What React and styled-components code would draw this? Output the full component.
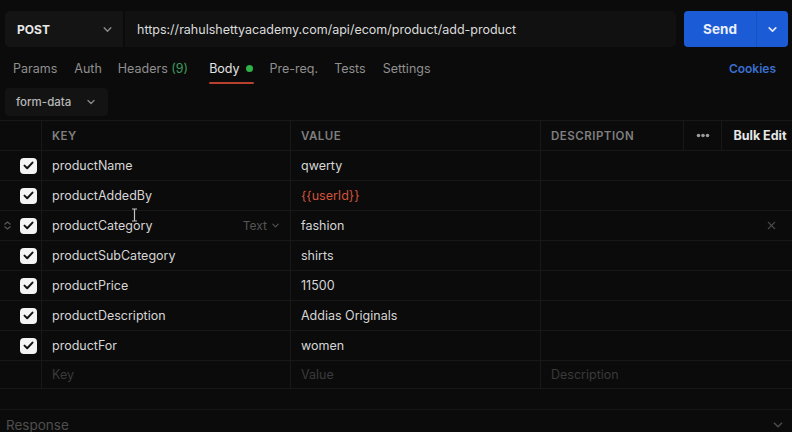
import React from 'react'
import styled, {createGlobalStyle} from 'styled-components'

const GlobalStyle = createGlobalStyle`
  html, body {
    margin: 0;
    padding: 0;
    background: #0b0b0b;
  }
  body {
    font-family: Inter, "Noto Sans", sans-serif;
    color: #e6e6e6;
    width: 792px;
    height: 432px;
    overflow: hidden;
  }
`

const Page = styled.div`
  position: relative;
  width: 792px;
`

const TopBar = styled.div`
  display: flex;
  align-items: stretch;
  height: 36px;
  padding: 11px 4px 0 5px;
  gap: 8px;
`

const UrlGroup = styled.div`
  display: flex;
  flex: 1;
  gap: 2px;
`

const Method = styled.div`
  width: 118px;
  background: #141414;
  border-radius: 5px 0 0 5px;
  display: flex;
  align-items: center;
  justify-content: space-between;
  padding: 0 10px 0 12px;
  box-sizing: border-box;
  font-weight: 700;
  font-size: 12px;
  color: #e8e8e8;
`

const Url = styled.div`
  flex: 1;
  background: #111111;
  border-radius: 0 5px 5px 0;
  display: flex;
  align-items: center;
  padding: 0 12px;
  font-size: 12.5px;
  color: #dcdcdc;
`

const Send = styled.div`
  width: 104px;
  display: flex;
  background: #1b5bd6;
  border-radius: 4px;
  overflow: hidden;
`

const SendLabel = styled.div`
  flex: 1;
  display: flex;
  align-items: center;
  justify-content: center;
  font-weight: 700;
  font-size: 13.5px;
  color: #e9eefb;
  border-right: 1px solid #1950bd;
`

const SendArrow = styled.div`
  width: 31px;
  display: flex;
  align-items: center;
  justify-content: center;
  color: #dfe7fa;
`

const Tabs = styled.div`
  display: flex;
  align-items: center;
  height: 30px;
  margin-top: 6px;
  padding: 0 16px 0 13px;
`

const Tab = styled.div`
  position: relative;
  font-size: 12.5px;
  color: ${p => (p.$active ? '#e4e4e4' : '#8f8f8f')};
  margin-right: ${p => p.$gap}px;
  display: flex;
  align-items: center;
  gap: 6px;
  height: 30px;
  &::after {
    content: '';
    display: ${p => (p.$active ? 'block' : 'none')};
    position: absolute;
    left: 0;
    right: -1px;
    bottom: -1px;
    height: 2px;
    background: #b8412e;
    border-radius: 1px;
  }
`

const Count = styled.span`
  color: #3f9a5c;
`

const Dot = styled.span`
  width: 7px;
  height: 7px;
  border-radius: 50%;
  background: #2fb344;
`

const Cookies = styled.div`
  margin-left: auto;
  font-size: 12px;
  font-weight: 600;
  color: #3a6fcf;
`

const BodyBar = styled.div`
  padding: 5px 0 4px 5px;
`

const BodyType = styled.div`
  width: 103px;
  height: 28px;
  box-sizing: border-box;
  background: #131313;
  border-radius: 4px;
  display: flex;
  align-items: center;
  justify-content: space-between;
  padding: 0 12px 0 11px;
  font-size: 11.5px;
  font-weight: 500;
  color: #b8b8b8;
`

const Table = styled.div`
  display: grid;
  grid-template-columns: 42px 249px 250px 143px 38px 1fr;
  border-top: 1px solid #181818;
`

const Row = styled.div`
  display: contents;
`

const Cell = styled.div`
  height: ${p => p.$h || 29}px;
  border-bottom: 1px solid #181818;
  border-right: ${p => (p.$line ? '1px solid #181818' : 'none')};
  display: flex;
  align-items: center;
  padding: 0 ${p => (p.$pad ? 10 : 0)}px;
  grid-column: ${p => p.$span || 'auto'};
  justify-content: ${p => p.$justify || 'flex-start'};
  font-size: 12.5px;
  color: ${p => p.$color || '#d6d6d6'};
  position: relative;
  min-width: 0;
  white-space: nowrap;
`

const HeadText = styled.span`
  font-size: 11.5px;
  font-weight: 600;
  letter-spacing: 0.5px;
  color: #7f7f7f;
`

const BulkEdit = styled.span`
  font-size: 12.5px;
  font-weight: 700;
  color: #e6e6e6;
  margin-left: 6px;
`

const Check = styled.div`
  width: 17px;
  height: 16px;
  border-radius: 4px;
  background: #f4f4f4;
  display: flex;
  align-items: center;
  justify-content: center;
  margin-left: 20px;
`

const TypeSelect = styled.span`
  margin-left: auto;
  display: flex;
  align-items: center;
  gap: 4px;
  color: #555;
  font-size: 12px;
`

const Handle = styled.span`
  position: absolute;
  left: 3px;
  top: 10px;
  display: flex;
`

const Cursor = styled.span`
  position: absolute;
  left: 131px;
  top: 208px;
  display: flex;
`

const Response = styled.div`
  margin-top: 20px;
  border-top: 1px solid #161616;
  height: 30px;
  display: flex;
  align-items: center;
  justify-content: space-between;
  padding: 0 8px 0 6px;
  font-size: 13.5px;
  color: #4e4e4e;
`

const Chevron = ({size = 10, color = 'currentColor', width = 1.6}) => (
  <svg width={size} height={size} viewBox="0 0 10 10" fill="none">
    <path d="M2 3.5 L5 6.5 L8 3.5" stroke={color} strokeWidth={width} strokeLinecap="round" strokeLinejoin="round" />
  </svg>
)

const Tick = () => (
  <svg width="11" height="9" viewBox="0 0 11 9" fill="none">
    <path d="M1.5 4.6 L4.2 7.2 L9.5 1.6" stroke="#111" strokeWidth="2" strokeLinecap="round" strokeLinejoin="round" />
  </svg>
)

const Dots = () => (
  <svg width="14" height="5" viewBox="0 0 14 5">
    <circle cx="2.5" cy="2.5" r="1.8" fill="#9a9a9a" />
    <circle cx="7" cy="2.5" r="1.8" fill="#9a9a9a" />
    <circle cx="11.5" cy="2.5" r="1.8" fill="#9a9a9a" />
  </svg>
)

const rows = [
  {key: 'productName', value: 'qwerty'},
  {key: 'productAddedBy', value: '{{userId}}', variable: true},
  {key: 'productCategory', value: 'fashion', hover: true},
  {key: 'productSubCategory', value: 'shirts'},
  {key: 'productPrice', value: '11500'},
  {key: 'productDescription', value: 'Addias Originals'},
  {key: 'productFor', value: 'women'}
]

const tabs = [
  {label: 'Params', gap: 17},
  {label: 'Auth', gap: 16},
  {label: 'Headers', count: '(9)', gap: 21},
  {label: 'Body', active: true, dot: true, gap: 17},
  {label: 'Pre-req.', gap: 16},
  {label: 'Tests', gap: 17},
  {label: 'Settings', gap: 0}
]

export default function App() {
  return (
    <Page>
      <GlobalStyle />
      <TopBar>
        <UrlGroup>
          <Method>
            POST
            <Chevron size={11} color="#8a8a8a" width={1.3} />
          </Method>
          <Url>https://rahulshettyacademy.com/api/ecom/product/add-product</Url>
        </UrlGroup>
        <Send>
          <SendLabel>Send</SendLabel>
          <SendArrow>
            <Chevron size={11} color="#dfe7fa" width={1.5} />
          </SendArrow>
        </Send>
      </TopBar>

      <Tabs>
        {tabs.map(t => (
          <Tab key={t.label} $active={t.active} $gap={t.gap}>
            <span>
              {t.label}
              {t.count && <Count> {t.count}</Count>}
            </span>
            {t.dot && <Dot />}
          </Tab>
        ))}
        <Cookies>Cookies</Cookies>
      </Tabs>

      <BodyBar>
        <BodyType>
          form-data
          <Chevron size={10} color="#8a8a8a" width={1.3} />
        </BodyType>
      </BodyBar>

      <Table>
        <Row>
          <Cell $line />
          <Cell $line $pad>
            <HeadText>KEY</HeadText>
          </Cell>
          <Cell $line $pad>
            <HeadText>VALUE</HeadText>
          </Cell>
          <Cell $line $pad>
            <HeadText>DESCRIPTION</HeadText>
          </Cell>
          <Cell $line $justify="center">
            <Dots />
          </Cell>
          <Cell $justify="center">
            <BulkEdit>Bulk Edit</BulkEdit>
          </Cell>
        </Row>

        {rows.map(r => (
          <Row key={r.key}>
            <Cell $line>
              {r.hover && (
                <Handle>
                  <svg width="9" height="9" viewBox="0 0 9 9" fill="none">
                    <path d="M1.5 3.5 L4.5 1 L7.5 3.5 M1.5 5.5 L4.5 8 L7.5 5.5" stroke="#5a5a5a" strokeWidth="1.1" />
                  </svg>
                </Handle>
              )}
              <Check>
                <Tick />
              </Check>
            </Cell>
            <Cell $line $pad>
              {r.key}
              {r.hover && (
                <TypeSelect>
                  Text
                  <Chevron size={9} color="#555" width={1.2} />
                </TypeSelect>
              )}
            </Cell>
            <Cell $line $pad $color={r.variable ? '#d0533a' : '#d6d6d6'}>
              {r.value}
            </Cell>
            <Cell $span="4 / 7" $justify="flex-end" $pad>
              {r.hover && (
                <svg width="9" height="9" viewBox="0 0 9 9" style={{marginRight: 6}}>
                  <path d="M1 1 L8 8 M8 1 L1 8" stroke="#4a4a4a" strokeWidth="1.1" />
                </svg>
              )}
            </Cell>
          </Row>
        ))}

        <Row>
          <Cell $line $h={27} />
          <Cell $line $pad $h={27} $color="#3a3a3a">
            Key
          </Cell>
          <Cell $line $pad $h={27} $color="#3a3a3a">
            Value
          </Cell>
          <Cell $span="4 / 7" $pad $h={27} $color="#3a3a3a">
            Description
          </Cell>
        </Row>
      </Table>

      <Cursor>
        <svg width="7" height="14" viewBox="0 0 7 14" fill="none">
          <path d="M1 1 H6 M3.5 1 V13 M1 13 H6" stroke="#c4c4c4" strokeWidth="1.2" />
        </svg>
      </Cursor>

      <Response>
        Response
        <Chevron size={12} color="#4a4a4a" width={1.3} />
      </Response>
    </Page>
  )
}
